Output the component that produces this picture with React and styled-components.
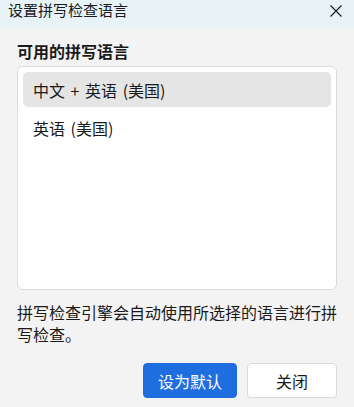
import React, { useState } from "react";
import styled, { createGlobalStyle } from "styled-components";

const Global = createGlobalStyle`
  html, body { margin: 0; padding: 0; background: #f3f3f3; }
  body {
    font-family: "Noto Sans CJK SC", "Noto Sans", "Liberation Sans", sans-serif;
    color: #1b1b1b;
    -webkit-font-smoothing: antialiased;
  }
`;

const Dialog = styled.div`
  width: 354px;
  height: 407px;
  display: flex;
  flex-direction: column;
  background: #f3f3f3;
  overflow: hidden;
`;

const TitleBar = styled.div`
  height: 29px;
  flex: none;
  display: flex;
  align-items: flex-start;
  justify-content: space-between;
  padding: 0 12px 0 8px;
  background: #e7f3f7;
  box-sizing: border-box;
`;

const Title = styled.span`
  font-size: 15px;
  line-height: 20px;
  margin-top: 0;
  color: #1a1a1a;
`;

const CloseButton = styled.button`
  border: none;
  background: transparent;
  padding: 0;
  margin-top: 5px;
  width: 12px;
  height: 12px;
  display: flex;
  cursor: pointer;
`;

const Body = styled.div`
  flex: 1;
  display: flex;
  flex-direction: column;
  padding: 11px 17px 0 17px;
`;

const SectionLabel = styled.div`
  font-size: 16px;
  font-weight: 700;
  line-height: 22px;
  color: #1a1a1a;
`;

const ListBox = styled.div`
  margin-top: 4px;
  height: 224px;
  box-sizing: border-box;
  background: #ffffff;
  border: 1px solid #dcdcdc;
  border-radius: 6px;
  padding: 5px;
  display: flex;
  flex-direction: column;
  gap: 3px;
`;

const ListItem = styled.div`
  height: 35px;
  flex: none;
  display: flex;
  align-items: center;
  padding-left: 10px;
  border-radius: 5px;
  font-size: 16px;
  word-spacing: 2px;
  white-space: pre;
  color: #1a1a1a;
  background: ${(p) => (p.$selected ? "#e5e5e5" : "transparent")};
  cursor: default;
`;

const Description = styled.p`
  margin: 11px 0 0 0;
  font-size: 16px;
  line-height: 22px;
  color: #1a1a1a;
`;

const ButtonRow = styled.div`
  margin-top: auto;
  margin-bottom: 9px;
  display: flex;
  justify-content: flex-end;
  gap: 10px;
`;

const Button = styled.button`
  height: 35px;
  width: ${(p) => p.$width}px;
  box-sizing: border-box;
  border-radius: 4px;
  font-family: inherit;
  font-size: 16px;
  padding: 0;
  border: 1px solid ${(p) => (p.$primary ? "#1f6ee0" : "#d9d9d9")};
  background: ${(p) => (p.$primary ? "#1f6ee0" : "#ffffff")};
  color: ${(p) => (p.$primary ? "#ffffff" : "#1a1a1a")};
  cursor: pointer;
`;

const items = ["中文 + 英语 (美国)", "英语 (美国)"];

export default function App() {
  const [sel, setSel] = useState(0);
  return (
    <>
      <Global />
      <Dialog>
        <TitleBar>
          <Title>设置拼写检查语言</Title>
          <CloseButton aria-label="关闭">
            <svg width="12" height="12" viewBox="0 0 12 12">
              <path d="M0.5 0.5 L11.5 11.5 M11.5 0.5 L0.5 11.5" stroke="#1a1a1a" strokeWidth="1.1" fill="none" />
            </svg>
          </CloseButton>
        </TitleBar>
        <Body>
          <SectionLabel>可用的拼写语言</SectionLabel>
          <ListBox>
            {items.map((t, i) => (
              <ListItem key={t} $selected={i === sel} onClick={() => setSel(i)}>
                {t}
              </ListItem>
            ))}
          </ListBox>
          <Description>拼写检查引擎会自动使用所选择的语言进行拼写检查。</Description>
          <ButtonRow>
            <Button $primary $width={94}>设为默认</Button>
            <Button $width={90}>关闭</Button>
          </ButtonRow>
        </Body>
      </Dialog>
    </>
  );
}
